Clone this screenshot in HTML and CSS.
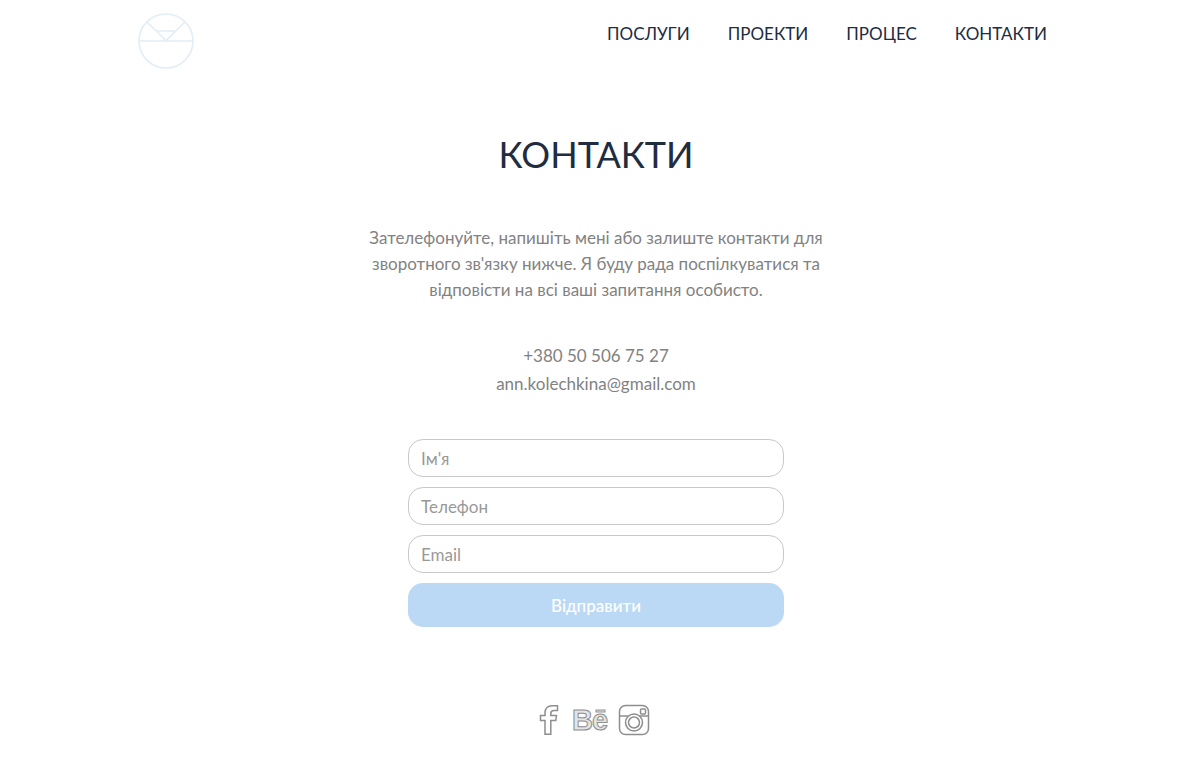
FILE: index.html
```html
<!DOCTYPE html>
<html lang="uk">
<head>
    <meta charset="UTF-8">
    <meta name="viewport" content="width=device-width, initial-scale=1.0">
    <title>Контакти</title>
    <link rel="stylesheet" href="styles.css">
</head>
<body>
<header class="header">
    <a class="logo" href="#" aria-label="Головна">
        <svg width="56" height="56" viewBox="0 0 56 56" fill="none" stroke="#e3eef6" stroke-width="1.700">
            <circle cx="28" cy="28" r="27"/>
            <path d="M1 28H55M9 9L28 27.500L47 9M19 18H37"/>
        </svg>
    </a>
    <nav class="menu">
        <a href="#services">ПОСЛУГИ</a>
        <a href="#projects">ПРОЕКТИ</a>
        <a href="#process">ПРОЦЕС</a>
        <a href="#contacts">КОНТАКТИ</a>
    </nav>
</header>

<main class="contacts" id="contacts">
    <h1>КОНТАКТИ</h1>
    <p class="intro">Зателефонуйте, напишіть мені або залиште контакти для зворотного зв'язку нижче. Я буду рада поспілкуватися та відповісти на всі ваші запитання особисто.</p>

    <div class="details">
        <a href="tel:+380505067527">+380 50 506 75 27</a>
        <a href="mailto:ann.kolechkina@gmail.com">ann.kolechkina@gmail.com</a>
    </div>

    <form class="form">
        <input type="text" name="name" placeholder="Ім'я" aria-label="Ім'я">
        <input type="tel" name="phone" placeholder="Телефон" aria-label="Телефон">
        <input type="email" name="email" placeholder="Email" aria-label="Email">
        <button type="submit">Відправити</button>
    </form>
</main>

<footer class="social">
    <a href="#" aria-label="Facebook">
        <svg width="24" height="32" viewBox="0 0 24 32" fill="#fff" stroke="#8e8e8e" stroke-width="1.500">
            <path d="M7 30.200V16.500H2.500V11.500H7V9C7 4 10 1.800 14 1.800H19.500V6.500H16C13.500 6.500 12.800 7.500 12.800 9.500V11.500H18.500L17.800 16.500H12.800V30.200Z"/>
        </svg>
    </a>
    <a href="#" aria-label="Behance">
        <svg width="38" height="32" viewBox="0 0 38 32">
            <text class="behance" x="1" y="26">B</text>
            <text class="behance" x="21" y="26">e</text>
            <rect x="25" y="6" width="9" height="2" fill="#e4e4e4" stroke="#8e8e8e"/>
        </svg>
    </a>
    <a href="#" aria-label="Instagram">
        <svg width="36" height="32" viewBox="0 0 36 32" fill="none" stroke="#8e8e8e" stroke-width="1.500">
            <rect x="1.500" y="1.500" width="29" height="29" rx="6"/>
            <path d="M1.500 12H10.500M21.500 12H30.500"/>
            <circle cx="16" cy="18.500" r="8.500"/>
            <circle cx="16" cy="18.500" r="5.500"/>
            <rect x="22.500" y="5" width="5" height="5" rx="1"/>
        </svg>
    </a>
</footer>
</body>
</html>
```

FILE: styles.css
```css
* {
    box-sizing: border-box;
}

body {
    margin: 0;
    padding-right: 8px;
    background-color: #fff;
    color: #828282;
    font-family: Lato, "Noto Sans", sans-serif;
    font-size: 17px;
}

a {
    color: inherit;
    text-decoration: none;
}

svg {
    display: block;
}

.header {
    display: flex;
    justify-content: space-between;
    align-items: flex-start;
    max-width: 916px;
    margin: 0 auto;
    padding-top: 13px;
}

.menu {
    display: flex;
    gap: 38px;
    padding: 9px 7px 0 0;
    color: #202c3f;
    line-height: 24px;
}

.contacts {
    display: flex;
    flex-direction: column;
    align-items: center;
    padding: 0 16px;
    text-align: center;
}

h1 {
    margin: 63px 0 49px;
    color: #202c3f;
    font-size: 36px;
    font-weight: 400;
    line-height: 44px;
}

.intro {
    max-width: 480px;
    margin: 0;
    line-height: 26px;
}

.details {
    display: flex;
    flex-direction: column;
    margin: 39px 0 41px;
    line-height: 28px;
}

.form {
    display: flex;
    flex-direction: column;
    gap: 10px;
    width: 100%;
    max-width: 376px;
}

.form input {
    height: 38px;
    padding: 0 12px;
    border: 1px solid #c8c8c8;
    border-radius: 15px;
    background-color: #fff;
    font: inherit;
}

.form input::placeholder {
    color: #999;
    opacity: 1;
}

.form button {
    height: 44px;
    border: none;
    border-radius: 15px;
    background-color: #bbd9f4;
    color: #fff;
    font: inherit;
    font-weight: 500;
    cursor: pointer;
}

.social {
    display: flex;
    justify-content: center;
    align-items: center;
    gap: 9px;
    padding: 77px 0 22px;
}

.behance {
    fill: #e4e4e4;
    stroke: #8e8e8e;
    font-family: "Liberation Sans", sans-serif;
    font-size: 29px;
    font-weight: 700;
}
```
